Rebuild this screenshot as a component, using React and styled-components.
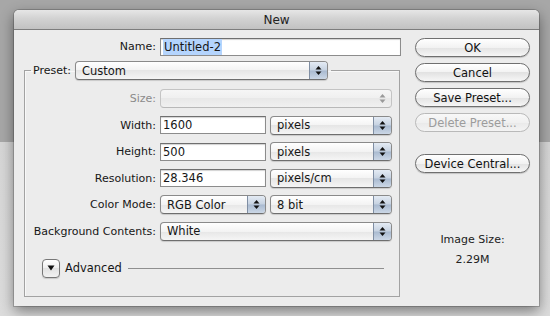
import React from 'react';
import styled, { createGlobalStyle } from 'styled-components';

const GlobalStyle = createGlobalStyle`
  html, body {
    margin: 0;
    padding: 0;
  }
  body {
    width: 550px;
    height: 316px;
    overflow: hidden;
    background: linear-gradient(to bottom, #a7a7a7 0, #a7a7a7 142px, #d6d6d6 142px, #dcdcdc 100%);
    font-family: 'DejaVu Sans', 'Open Sans', sans-serif;
    font-size: 11px;
    color: #161616;
  }
`;

const Desktop = styled.div`
  padding: 10px 11px 0 14px;
`;

const Dialog = styled.div`
  width: 525px;
  height: 296px;
  background: #ececec;
  border-radius: 5px 5px 0 0;
  box-shadow: 0 5px 14px rgba(0, 0, 0, 0.45), 0 0 0 1px rgba(0, 0, 0, 0.18);
  display: flex;
  flex-direction: column;
`;

const TitleBar = styled.div`
  height: 19px;
  border-radius: 5px 5px 0 0;
  background: linear-gradient(to bottom, #e6e6e6 0%, #d2d2d2 45%, #c2c2c2 100%);
  border-bottom: 1px solid #7d7d7d;
  display: flex;
  align-items: center;
  justify-content: center;
  font-size: 12px;
  color: #222;
`;

const Body = styled.div`
  display: flex;
  gap: 14px;
  padding: 7px 9px 0 10px;
`;

const LeftPane = styled.div`
  width: 377px;
  display: flex;
  flex-direction: column;
  gap: 5px;
`;

const NameRow = styled.div`
  display: grid;
  grid-template-columns: 132px 241px;
  column-gap: 4px;
  align-items: center;
  height: 19px;
`;

const Label = styled.label`
  text-align: right;
  white-space: nowrap;
  color: ${p => (p.disabled ? '#8a8a8a' : '#161616')};
`;

const TextField = styled.div`
  height: 18px;
  box-sizing: border-box;
  border: 1px solid #8c8c8c;
  border-top-color: #6f6f6f;
  background: #fff;
  box-shadow: inset 0 1px 1px rgba(0, 0, 0, 0.18);
  display: flex;
  align-items: center;
  padding-left: 2px;
  font-size: 11.5px;
`;

const Selection = styled.span`
  background: #b4d4fd;
  padding: 1px 1px;
`;

const Group = styled.fieldset`
  margin: 0;
  width: 376px;
  box-sizing: border-box;
  border: 1px solid #a2a2a2;
  box-shadow: inset 1px 1px 0 #f8f8f8;
  padding: 9px 0 18px 0;
`;

const Legend = styled.legend`
  display: flex;
  align-items: center;
  gap: 4px;
  margin-left: 6px;
  padding: 0 3px 0 2px;
`;

const Fields = styled.div`
  display: grid;
  grid-template-columns: 131px 106px 122px;
  grid-auto-rows: 19px;
  column-gap: 4px;
  row-gap: 7.6px;
  align-items: center;
`;

const PopupBox = styled.div`
  height: 19px;
  box-sizing: border-box;
  width: ${p => (p.width ? `${p.width}px` : 'auto')};
  grid-column: ${p => p.span || 'auto'};
  border: 1px solid ${p => (p.disabled ? '#c4c4c4' : '#8a8a8a')};
  border-bottom-color: ${p => (p.disabled ? '#b8b8b8' : '#6e6e6e')};
  border-radius: 4px;
  background: ${p =>
    p.disabled
      ? 'linear-gradient(to bottom, #f6f6f6 0%, #efefef 50%, #e8e8e8 50%, #f0f0f0 100%)'
      : 'linear-gradient(to bottom, #ffffff 0%, #f3f3f3 50%, #e6e6e6 50%, #f5f5f5 100%)'};
  box-shadow: ${p => (p.disabled ? 'none' : '0 1px 1px rgba(0,0,0,0.15)')};
  display: flex;
  align-items: stretch;
  overflow: hidden;
`;

const PopupValue = styled.div`
  flex: 1;
  display: flex;
  align-items: center;
  padding-left: 6px;
  white-space: nowrap;
  font-size: 11.5px;
`;

const ArrowBox = styled.div`
  width: 17px;
  display: flex;
  align-items: center;
  justify-content: center;
  border-left: 1px solid ${p => (p.disabled ? 'transparent' : '#7f8ea3')};
  background: ${p =>
    p.disabled
      ? 'transparent'
      : 'linear-gradient(to bottom, #e4ebf4 0%, #c6d2e1 48%, #a9bad0 52%, #cbd7e6 100%)'};
`;

const Arrows = ({ color }) => (
  <svg width="7" height="11" viewBox="0 0 7 11">
    <path d="M3.5 1 L6.5 4.5 L0.5 4.5 Z" fill={color} />
    <path d="M3.5 10 L6.5 6.5 L0.5 6.5 Z" fill={color} />
  </svg>
);

const Popup = ({ value, disabled, width, span }) => (
  <PopupBox disabled={disabled} width={width} span={span}>
    <PopupValue>{value}</PopupValue>
    <ArrowBox disabled={disabled}>
      <Arrows color={disabled ? '#9a9a9a' : '#111'} />
    </ArrowBox>
  </PopupBox>
);

const AdvancedRow = styled.div`
  display: flex;
  align-items: center;
  margin: 18px 15px 0 17px;
  gap: 5px;
  font-size: 11.5px;
`;

const Disclosure = styled.div`
  width: 18px;
  height: 19px;
  box-sizing: border-box;
  border: 1px solid #777;
  border-radius: 4px;
  background: linear-gradient(to bottom, #ffffff 0%, #eeeeee 50%, #e2e2e2 50%, #f2f2f2 100%);
  box-shadow: 0 1px 1px rgba(0, 0, 0, 0.15);
  display: flex;
  align-items: center;
  justify-content: center;
`;

const Rule = styled.div`
  flex: 1;
  height: 1px;
  background: #8f8f8f;
  margin-left: 1px;
`;

const RightPane = styled.div`
  width: 115px;
  margin-top: 1px;
  display: flex;
  flex-direction: column;
  gap: 6px;
`;

const Button = styled.div`
  height: 19px;
  box-sizing: border-box;
  border: 1px solid ${p => (p.disabled ? '#b9b9b9' : '#6f6f6f')};
  border-radius: 10px;
  background: ${p =>
    p.disabled
      ? 'linear-gradient(to bottom, #f8f8f8 0%, #f0f0f0 50%, #e9e9e9 50%, #f3f3f3 100%)'
      : 'linear-gradient(to bottom, #ffffff 0%, #f2f2f2 50%, #e2e2e2 50%, #f6f6f6 100%)'};
  box-shadow: ${p => (p.disabled ? 'none' : '0 1px 1px rgba(0,0,0,0.18)')};
  display: flex;
  align-items: center;
  justify-content: center;
  font-size: 11.5px;
  color: ${p => (p.disabled ? '#9c9c9c' : '#111')};
  margin-top: ${p => p.gapBefore || 0}px;
`;

const Info = styled.div`
  margin-top: 54px;
  display: flex;
  flex-direction: column;
  align-items: center;
  gap: 7px;
  color: #222;
`;

export default function App() {
  return (
    <>
      <GlobalStyle />
      <Desktop>
        <Dialog>
          <TitleBar>New</TitleBar>
          <Body>
            <LeftPane>
              <NameRow>
                <Label>Name:</Label>
                <TextField>
                  <Selection>Untitled-2</Selection>
                </TextField>
              </NameRow>
              <Group>
                <Legend>
                  <Label>Preset:</Label>
                  <Popup value="Custom" width={253} />
                </Legend>
                <Fields>
                  <Label disabled>Size:</Label>
                  <Popup disabled span="2 / 4" value="" />

                  <Label>Width:</Label>
                  <TextField>1600</TextField>
                  <Popup value="pixels" />

                  <Label>Height:</Label>
                  <TextField>500</TextField>
                  <Popup value="pixels" />

                  <Label>Resolution:</Label>
                  <TextField>28.346</TextField>
                  <Popup value="pixels/cm" />

                  <Label>Color Mode:</Label>
                  <Popup value="RGB Color" />
                  <Popup value="8 bit" />

                  <Label>Background Contents:</Label>
                  <Popup span="2 / 4" value="White" />
                </Fields>
                <AdvancedRow>
                  <Disclosure>
                    <svg width="8" height="6" viewBox="0 0 8 6">
                      <path d="M0.5 0.5 L7.5 0.5 L4 5.5 Z" fill="#111" />
                    </svg>
                  </Disclosure>
                  <span>Advanced</span>
                  <Rule />
                </AdvancedRow>
              </Group>
            </LeftPane>
            <RightPane>
              <Button>OK</Button>
              <Button>Cancel</Button>
              <Button>Save Preset...</Button>
              <Button disabled>Delete Preset...</Button>
              <Button gapBefore={16}>Device Central...</Button>
              <Info>
                <span>Image Size:</span>
                <span>2.29M</span>
              </Info>
            </RightPane>
          </Body>
        </Dialog>
      </Desktop>
    </>
  );
}
